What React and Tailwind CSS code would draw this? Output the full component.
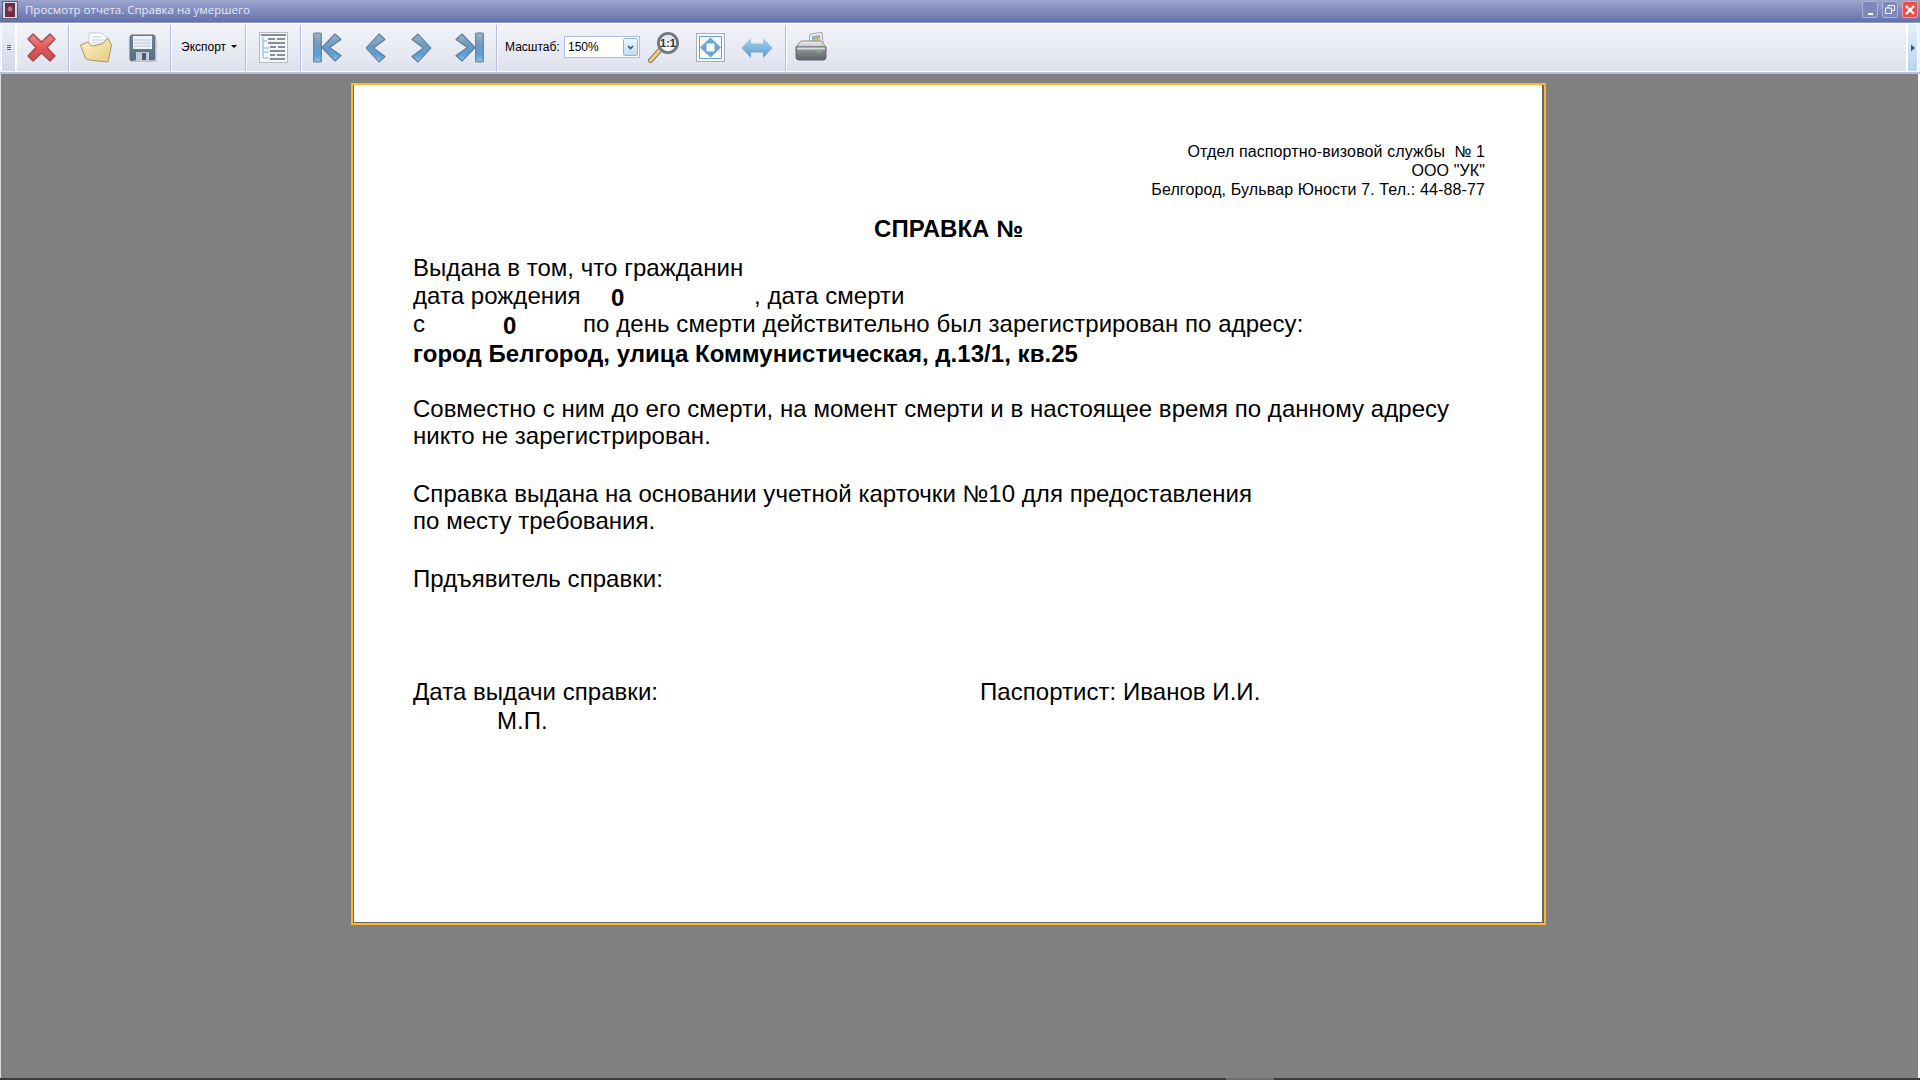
import React from "react";

const Sep = ({ className = "" }) => <div className={`w-[2px] h-[46px] bg-[#b4bcdc] border-r border-white shrink-0 ${className}`}></div>;

const CloseIcon = () => (
  <svg width="29" height="29" viewBox="0 0 29 29" className="ml-[10px] shrink-0">
    <defs>
      <linearGradient id="redg" x1="0" y1="0" x2="0" y2="1">
        <stop offset="0" stopColor="#e98a8c" />
        <stop offset="0.5" stopColor="#e4565c" />
        <stop offset="1" stopColor="#c94a4e" />
      </linearGradient>
    </defs>
    <path d="M6 1 L14.5 9 L23 1 L28 6 L20 14.5 L28 23 L23 28 L14.5 20 L6 28 L1 23 L9 14.5 L1 6 Z" fill="url(#redg)" stroke="#9a4f50" strokeWidth="1.4" strokeLinejoin="round" />
  </svg>
);

const FolderIcon = () => (
  <svg width="32" height="31" viewBox="0 0 32 31" className="ml-[10px] shrink-0">
    <defs>
      <linearGradient id="foldg" x1="0" y1="0" x2="1" y2="1">
        <stop offset="0" stopColor="#fdf0c4" />
        <stop offset="1" stopColor="#e6cc86" />
      </linearGradient>
    </defs>
    <path d="M9 1 L22 1 L29 8 L29 25 L9 25 Z" fill="#fafbfc" stroke="#c6c9d0" />
    <path d="M12 5h9M12 8h14M12 11h14" stroke="#c3cbdc" strokeWidth="1" />
    <path d="M0.5 13 L8 10 L12 14 L22 12 L28 6 L31.5 13 L28 30 L9 28 Q6 28 5 25 Z" fill="url(#foldg)" stroke="#a99760" strokeWidth="1" strokeLinejoin="round" />
  </svg>
);

const SaveIcon = () => (
  <svg width="29" height="28" viewBox="0 0 29 28" className="ml-[17px] shrink-0">
    <defs>
      <linearGradient id="diskg" x1="0" y1="0" x2="0" y2="1">
        <stop offset="0" stopColor="#6d86a3" />
        <stop offset="1" stopColor="#566a84" />
      </linearGradient>
    </defs>
    <rect x="1" y="1" width="25" height="26" rx="2" fill="url(#diskg)" stroke="#5d6a7c" />
    <rect x="4" y="2" width="19" height="13" fill="#eef1f7" />
    <path d="M5 6h17M5 9h17M5 12h17" stroke="#b9c6d8" strokeWidth="1" />
    <rect x="7" y="18" width="13" height="9" fill="#c4ccd8" />
    <rect x="13" y="19" width="4" height="7" fill="#4e5d72" />
    <path d="M27 6V27H4" stroke="#c3c7d1" strokeWidth="1.5" fill="none" />
  </svg>
);

const TreeIcon = () => (
  <svg width="29" height="31" viewBox="0 0 29 31" className="ml-[12px] shrink-0">
    <rect x="0.5" y="0.5" width="28" height="30" fill="#f4f6f8" stroke="#b6bbc3" />
    <path d="M2 3h25M9 7h7M18 7h8M9 11h17M11 15h6M19 15h7M11 19h15M11 23h5M18 23h8M11 27h15" stroke="#666c75" strokeWidth="1.6" />
    <path d="M4 5V26M4 9h4M4 16h6M4 20h6M4 26h6" stroke="#7eb3d6" strokeWidth="1" fill="none" />
  </svg>
);

const navStops = (
  <>
    <stop offset="0" stopColor="#9db4c6" />
    <stop offset="0.4" stopColor="#6a9bc4" />
    <stop offset="0.75" stopColor="#5a9fd6" />
    <stop offset="1" stopColor="#8ac4ea" />
  </>
);

const Chevron = ({ id, flip, className = "" }) => (
  <svg width="21" height="30" viewBox="0 0 21 30" className={`shrink-0 ${className}`} style={{ transform: flip ? "scaleX(-1)" : "none" }}>
    <defs>
      <linearGradient id={id} x1="0" y1="0" x2="0" y2="1">{navStops}</linearGradient>
    </defs>
    <path d="M14 1 L20 6.5 L8.5 15 L20 23.5 L14 29 L1 15 Z" fill={`url(#${id})`} stroke="#5f7c96" strokeWidth="1.1" strokeLinejoin="round" />
  </svg>
);

const BarChevron = ({ id, flip, className = "" }) => (
  <svg width="29" height="31" viewBox="0 0 29 31" className={`shrink-0 ${className}`} style={{ transform: flip ? "scaleX(-1)" : "none" }}>
    <defs>
      <linearGradient id={id} x1="0" y1="0" x2="0" y2="1">{navStops}</linearGradient>
    </defs>
    <rect x="0.7" y="1" width="7.6" height="29" rx="1" fill={`url(#${id})`} stroke="#66788c" strokeWidth="1.1" />
    <path d="M22 2 L28 7.5 L16.5 15.5 L28 23.5 L22 29 L9 15.5 Z" fill={`url(#${id})`} stroke="#5f7c96" strokeWidth="1.1" strokeLinejoin="round" />
  </svg>
);

const ZoomIcon = () => (
  <svg width="33" height="32" viewBox="0 0 33 32" className="ml-[7px] shrink-0">
    <defs>
      <linearGradient id="lens" x1="0" y1="0" x2="0" y2="1">
        <stop offset="0" stopColor="#dde4ea" />
        <stop offset="1" stopColor="#fbfcfd" />
      </linearGradient>
    </defs>
    <path d="M3.5 28.5 L13 18" stroke="#96794a" strokeWidth="5" strokeLinecap="round" />
    <path d="M3.5 28.5 L13 18" stroke="#e6cc98" strokeWidth="3" strokeLinecap="round" />
    <circle cx="21" cy="11" r="9.6" fill="url(#lens)" stroke="#6f7880" strokeWidth="2.8" />
    <text x="21" y="15" textAnchor="middle" fontSize="11" fontWeight="700" fill="#333" fontFamily="Liberation Sans">1:1</text>
  </svg>
);

const FitIcon = () => (
  <svg width="29" height="29" viewBox="0 0 29 29" className="ml-[16px] shrink-0">
    <rect x="0.5" y="0.5" width="28" height="28" fill="#f6f7f9" stroke="#a8adb6" />
    <path d="M3.5 3.5h22v22h-22z" fill="none" stroke="#6d9dc2" strokeWidth="1" />
    <path d="M14.5 4.5 L25 14.5 L14.5 24.5 L4 14.5 Z" fill="#6da5d2" />
    <path d="M10.5 10.5h8v8h-8z" fill="#f6f7f9" />
  </svg>
);

const WidthIcon = () => (
  <svg width="32" height="22" viewBox="0 0 32 22" className="ml-[16px] shrink-0">
    <defs>
      <linearGradient id="wg" x1="0" y1="0" x2="0" y2="1">
        <stop offset="0" stopColor="#a9d2ec" />
        <stop offset="1" stopColor="#5a9ad0" />
      </linearGradient>
    </defs>
    <path d="M0.5 11 L10 1 V6.5 H22 V1 L31.5 11 L22 21 V15.5 H10 V21 Z" fill="url(#wg)" />
  </svg>
);

const PrintIcon = () => (
  <svg width="32" height="30" viewBox="0 0 32 30" className="ml-[8px] -mt-[2px] shrink-0">
    <defs>
      <linearGradient id="prnb" x1="0" y1="0" x2="0" y2="1">
        <stop offset="0" stopColor="#9b9ea1" />
        <stop offset="1" stopColor="#5d6063" />
      </linearGradient>
      <linearGradient id="prnt" x1="0" y1="0" x2="0" y2="1">
        <stop offset="0" stopColor="#eceef0" />
        <stop offset="1" stopColor="#c3c6c9" />
      </linearGradient>
    </defs>
    <path d="M14 11 L15 2 L27 0.5 L28 11 Z" fill="#f4f1e4" stroke="#a3a6aa" />
    <path d="M17 4 L25 3 L25.5 10 L17 10 Z" fill="#88b2d4" />
    <path d="M19 7 L25 5.5 L25.5 10 L18 10 Z" fill="#dfc25f" />
    <path d="M1 15 L6 9 H26 L31 15 Z" fill="url(#prnt)" stroke="#8a8d91" strokeLinejoin="round" />
    <path d="M1 15 H31 V25 Q31 28 28 28 H4 Q1 28 1 25 Z" fill="url(#prnb)" stroke="#606366" />
    <rect x="2" y="15.5" width="28" height="2" fill="#d8dadc" />
    <rect x="22" y="18.5" width="4" height="1.5" fill="#6cc96c" />
  </svg>
);

export default function App() {
  return (
    <div className="w-[1920px] h-[1080px] overflow-hidden flex flex-col bg-[#808080] font-['Liberation_Sans',sans-serif]">
      {/* window title */}
      <div className="h-[23px] shrink-0 flex items-start justify-between bg-gradient-to-b from-[#9ca5cd] to-[#6570aa] border-b border-[#8f9ac9]">
        <div className="flex items-center h-[19px]">
          <svg width="16" height="18" viewBox="0 0 16 18" className="ml-[2px]">
            <rect x="0.5" y="0.5" width="15" height="17" fill="#d8dbe6" stroke="#5a5f78" />
            <rect x="3" y="2" width="10" height="14" fill="#6f2b45" />
            <circle cx="8" cy="8" r="2.5" fill="#a87f72" />
          </svg>
          <span className="ml-[7px] text-[11.5px] leading-none text-[#e6e9f6] font-['Open_Sans',sans-serif]">Просмотр отчета. Справка на умершего</span>
        </div>
        <div className="flex items-center gap-[4px] pr-[2px] pt-[1px]">
          <div className="w-[16px] h-[17px] rounded-[2px] bg-[#7f88ba] border border-[#aab2d6] flex items-end justify-center pb-[2px]">
            <div className="w-[5px] h-[2px] bg-white"></div>
          </div>
          <div className="w-[16px] h-[17px] rounded-[2px] bg-[#7f88ba] border border-[#aab2d6] flex items-center justify-center">
            <svg width="10" height="9" viewBox="0 0 10 9">
              <path d="M3 2.5V0.5H9.5V5.5H7M0.5 3H6.5V8.5H0.5Z" fill="none" stroke="white" />
            </svg>
          </div>
          <div className="w-[16px] h-[17px] rounded-[2px] bg-[#ee4c45] border border-[#f3a4a0] flex items-center justify-center">
            <svg width="10" height="10" viewBox="0 0 10 10">
              <path d="M1 1L9 9M9 1L1 9" stroke="white" strokeWidth="2.4" />
            </svg>
          </div>
        </div>
      </div>

      {/* toolbar */}
      <div className="h-[51px] shrink-0 flex items-stretch bg-[#f1f2f8] border-b-2 border-[#b9c0de]">
        <div className="w-[15px] ml-[1px] shrink-0 flex items-center justify-center bg-gradient-to-b from-[#eef0f7] to-[#d3d7ea] border border-white">
          <div className="flex flex-col gap-[1px] bg-[#e8ebf6] p-[1px]">
            <div className="w-[4px] h-[1px] bg-[#3e57a8]"></div>
            <div className="w-[4px] h-[1px] bg-[#3e57a8]"></div>
            <div className="w-[4px] h-[1px] bg-[#3e57a8]"></div>
          </div>
        </div>
        <div className="flex-1 flex items-center bg-gradient-to-b from-[#f3f4f9] to-[#dfe2ee] border border-white">
          <CloseIcon />
          <Sep className="ml-[12px]" />
          <FolderIcon />
          <SaveIcon />
          <Sep className="ml-[12px]" />
          <div className="w-[73px] shrink-0 flex items-center pl-[9px] gap-[5px] text-[12px] text-black -mt-[2px]">
            Экспорт
            <div className="w-0 h-0 border-x-[3px] border-x-transparent border-t-[3px] border-t-black"></div>
          </div>
          <Sep />
          <TreeIcon />
          <Sep className="ml-[12px]" />
          <BarChevron id="c1" className="ml-[11px]" />
          <Chevron id="c2" className="ml-[23px]" />
          <Chevron id="c3" flip className="ml-[25px]" />
          <BarChevron id="c4" flip className="ml-[23px]" />
          <Sep className="ml-[12px]" />
          <span className="ml-[7px] w-[59px] shrink-0 text-[12px] text-black -mt-[2px]">Масштаб:</span>
          <div className="w-[76px] h-[22px] shrink-0 flex items-center justify-between bg-white border border-[#b4bcdc] text-[12px] text-black pl-[3px] pr-[1px] -mt-[1px]">
            150%
            <div className="w-[15px] h-[18px] rounded-[2px] bg-gradient-to-b from-[#eef5fc] to-[#c2dcf2] border border-[#8eb4d8] flex items-center justify-center">
              <svg width="7" height="5" viewBox="0 0 7 5">
                <path d="M1 1L3.5 3.5L6 1" fill="none" stroke="#2a4f96" strokeWidth="1.6" />
              </svg>
            </div>
          </div>
          <ZoomIcon />
          <FitIcon />
          <WidthIcon />
          <Sep className="ml-[12px]" />
          <PrintIcon />
        </div>
        <div className="w-[11px] mr-[2px] shrink-0 flex items-center justify-center bg-gradient-to-b from-[#e4f1fb] to-[#b5d5ee] border border-white">
          <svg width="6" height="8" viewBox="0 0 6 8">
            <path d="M1 0.5L5 4L1 7.5Z" fill="#2a5aa8" />
          </svg>
        </div>
      </div>

      {/* report area */}
      <div className="flex-1 flex flex-col items-start pl-[350px] pt-[9px] border-l border-[#d8d8d8] border-r-2 border-r-white">
        <div className="w-[1195px] h-[842px] shrink-0 bg-white border-2 border-[#fcb72d]">
          <div className="h-full border-l border-r-2 border-b border-[#66666c] pt-[57px] pl-[59px] pr-[56px] text-black text-[24px] leading-[28px] tracking-[0.04px]">
            <div className="text-right text-[16px] leading-[19px] pr-[1px] tracking-[0.12px]">
              <p>Отдел паспортно-визовой службы&nbsp; № 1</p>
              <p>ООО "УК"</p>
              <p>Белгород, Бульвар Юности 7. Тел.: 44-88-77</p>
            </div>
            <h1 className="mt-[16px] text-center font-bold pr-[2px]">СПРАВКА №</h1>
            <p className="mt-[11px]">Выдана в том, что гражданин</p>
            <div className="flex">
              <span className="w-[198px]">дата рождения</span>
              <b className="w-[143px] pt-[2px]">0</b>
              <span>, дата смерти</span>
            </div>
            <div className="flex -mt-[2px]">
              <span className="w-[90px]">с</span>
              <b className="w-[80px] pt-[2px]">0</b>
              <span className="tracking-[0.07px]">по день смерти действительно был зарегистрирован по адресу:</span>
            </div>
            <p className="font-bold">город Белгород, улица Коммунистическая, д.13/1, кв.25</p>
            <p className="mt-[27px] -mb-[1px]">Совместно с ним до его смерти, на момент смерти и в настоящее время по данному адресу</p>
            <p>никто не зарегистрирован.</p>
            <p className="mt-[30px] -mb-[1px]">Справка выдана на основании учетной карточки №10 для предоставления</p>
            <p>по месту требования.</p>
            <p className="mt-[30px]">Прдъявитель справки:</p>
            <div className="flex mt-[85px]">
              <span className="w-[567px]">Дата выдачи справки:</span>
              <span>Паспортист: Иванов И.И.</span>
            </div>
            <p className="pl-[84px] mt-[1px]">М.П.</p>
          </div>
        </div>
      </div>
      <div className="h-[2px] shrink-0 flex bg-[#3c3c3c]">
        <div className="ml-[1226px] w-[48px] bg-[#6c6c6c]"></div>
      </div>
    </div>
  );
}
